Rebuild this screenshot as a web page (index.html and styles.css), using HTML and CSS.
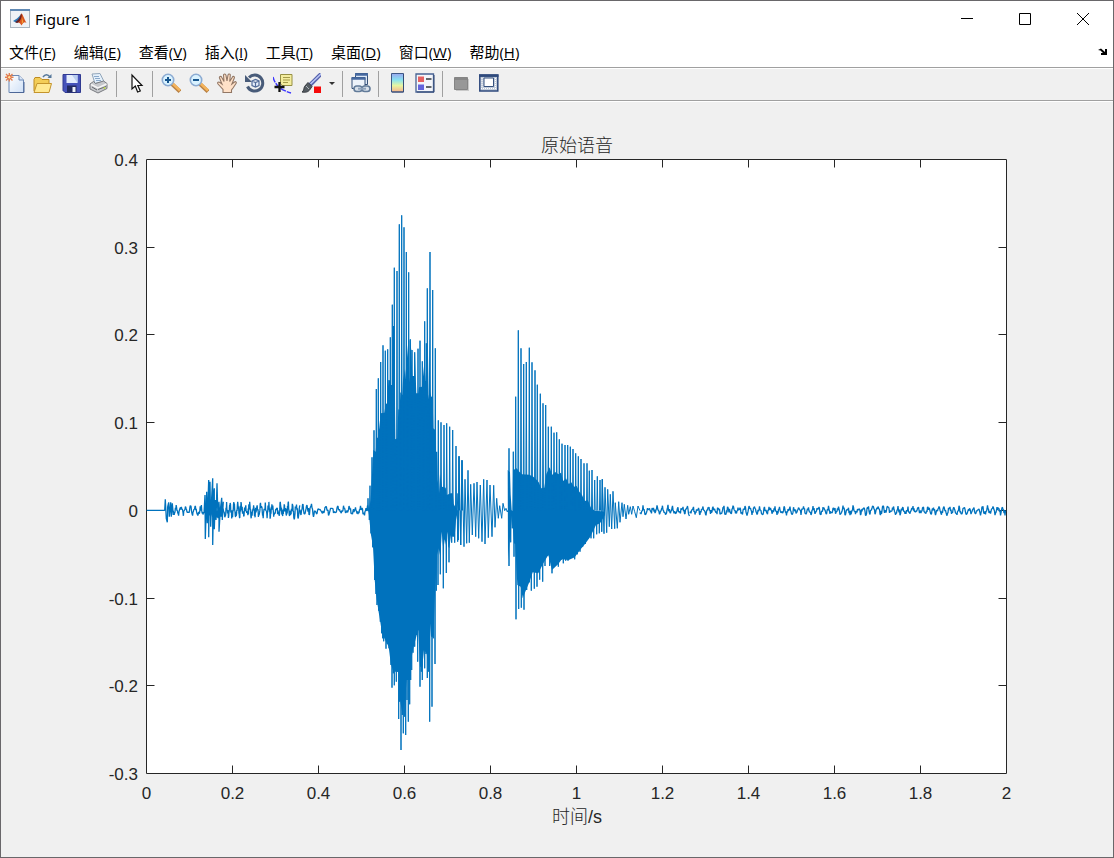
FILE: index.html
```html
<!DOCTYPE html>
<html lang="zh-CN">
<head>
<meta charset="utf-8">
<title>Figure 1</title>
<link rel="stylesheet" href="styles.css">
</head>
<body>
<div class="window">
  <header class="titlebar">
    <svg class="app-icon" viewBox="0 0 20 20" aria-hidden="true">
      <rect x=".5" y=".5" width="19" height="18" fill="#eef2f6" stroke="#a9b4be"/>
      <rect x="0" y="0" width="20" height="2" fill="#6089b4"/>
      <path d="M3 12 7 9.500 9.500 7 11 5 10.500 12 7 14z" fill="#2c76b5"/>
      <path d="M11.500 4.500c1 0 2 4 5 9.500-2-1.500-3-.500-5 2.500-1-2-2-3-3.500-3 1.500-2 2-8 3.500-9z" fill="#d9541e"/>
      <path d="M11.500 4.500c.800 3-.500 7-3.500 9l-1 .500-2-1c3-1 5-5 6.500-8.500z" fill="#6b2021"/>
      <path d="M11.800 8l1.500 5-1.500 2z" fill="#f3a43a"/>
    </svg>
    <h1 class="title">Figure 1</h1>
    <div class="controls">
      <button class="control" aria-label="最小化"><svg viewBox="0 0 12 12"><path d="M0 5.500h12"/></svg></button>
      <button class="control" aria-label="最大化"><svg viewBox="0 0 12 12"><path d="M.5.5h11v11H.5z"/></svg></button>
      <button class="control" aria-label="关闭"><svg viewBox="0 0 12 12"><path d="M0 0l12 12M12 0L0 12"/></svg></button>
    </div>
  </header>
  <nav class="menubar">
    <button class="menu">文件(<u>F</u>)</button>
    <button class="menu">编辑(<u>E</u>)</button>
    <button class="menu">查看(<u>V</u>)</button>
    <button class="menu">插入(<u>I</u>)</button>
    <button class="menu">工具(<u>T</u>)</button>
    <button class="menu">桌面(<u>D</u>)</button>
    <button class="menu">窗口(<u>W</u>)</button>
    <button class="menu">帮助(<u>H</u>)</button>
    <button class="dock" aria-label="停靠"><svg viewBox="0 0 10 8"><path d="M0 2 3 .500 7 4V1h2v6H3V5h2L2.500 2.500z"/></svg></button>
  </nav>
  <div class="toolbar" role="toolbar">
    <button class="tool" aria-label="新建"><svg viewBox="0 0 20 22">
      <defs><linearGradient id="page" x2="1" y2="1"><stop offset="0" stop-color="#fff"/><stop offset="1" stop-color="#cfe0f6"/></linearGradient></defs>
      <path d="M4 2.500h10l4.500 4.500v12.500H4z" fill="url(#page)" stroke="#6b88b5"/><path d="M5 19.500h14V9" fill="none" stroke="#4d6797"/><path d="M14 2.500V7h4.500" fill="#dbe7f8" stroke="#6b88b5"/>
      <path d="M1 1l6.500 6.500M7.500 1 1 7.500M0 4.300h8.500M4.300 0v8.500" stroke="#e08052" stroke-width="1.400"/><circle cx="4.300" cy="4.300" r="1.800" fill="#ffe19a" stroke="#e36b3c"/></svg></button>
    <button class="tool" aria-label="打开"><svg viewBox="0 0 20 22">
      <path d="M1 18V6.500l1-2h5l2 2h7V18z" fill="#f3cd57" stroke="#bd8b22"/><path d="M1 19.500 4 10.500h14.500l-2.500 9z" fill="#ffe991" stroke="#c4942b"/>
      <path d="M10 4c2-3 5-3 7 0" fill="none" stroke="#56789b" stroke-width="1.500"/><path d="M14.500 5h4V1z" fill="#56789b"/></svg></button>
    <button class="tool" aria-label="保存"><svg viewBox="0 0 20 22">
      <path d="M2 1.500h17.500v18H4l-2-2z" fill="#4653ba" stroke="#303a91"/><path d="M5.500 2h11v8h-11z" fill="#e4edfc"/><path d="M11 2h5.500v8z" fill="#b9cdf0"/><path d="M6 12.500h9.500v7H6z" fill="#232b62"/><path d="M11.500 14h3v5h-3z" fill="#eef2fb"/></svg></button>
    <button class="tool" aria-label="打印"><svg viewBox="0 0 20 22">
      <path d="M3 1l8-.500 4 8-9 2z" fill="#e4f0fb" stroke="#91a5b9"/><path d="M5 3.500h5M6 5.500h5M7 7.500h5" stroke="#89a8ca"/>
      <path d="M1 11 4.500 8.500l2 2 8-2.500 3.500 2.500v5L9 20l-8-4z" fill="#c6c8cc" stroke="#787b80"/><path d="M2 11.500 9 15l8.500-4" fill="none" stroke="#f5f5f5" stroke-width="1.500"/><path d="M9 16.500l8-3M3 14l5 3" stroke="#66696d"/><circle cx="15.500" cy="15" r="1" fill="#bcdc42"/></svg></button>
    <span class="separator"></span>
    <button class="tool" aria-label="编辑绘图"><svg viewBox="0 0 20 22">
      <path d="M7 2v14l3.300-3 2.300 6 2.700-1-2.500-5.500H17z" fill="#fff" stroke="#111" stroke-width="1.200"/></svg></button>
    <span class="separator"></span>
    <button class="tool" aria-label="放大"><svg viewBox="0 0 20 22">
      <path d="M11 11l8 7.500" stroke="#b98245" stroke-width="4"/><path d="M11.500 10.500l7.500 7" stroke="#f5b45b" stroke-width="2.400"/><circle cx="7" cy="7" r="5.700" fill="#d9f2ff" stroke="#8cabd2" stroke-width="1.600"/><path d="M4 7h6M7 4v6" stroke="#17568e" stroke-width="2"/></svg></button>
    <button class="tool" aria-label="缩小"><svg viewBox="0 0 20 22">
      <path d="M11 11l8 7.500" stroke="#b98245" stroke-width="4"/><path d="M11.500 10.500l7.500 7" stroke="#f5b45b" stroke-width="2.400"/><circle cx="7" cy="7" r="5.700" fill="#d9f2ff" stroke="#8cabd2" stroke-width="1.600"/><path d="M4 7h6" stroke="#17568e" stroke-width="2"/></svg></button>
    <button class="tool" aria-label="平移"><svg viewBox="0 0 20 22">
      <path d="M6 19.500v-3L1 11c-1-1.500.500-2.500 2-1.500l2 1.500L2.500 5C2 3.300 4 2.800 4.700 4.300L7 8.500 6.500 2.300c0-1.800 2.200-1.800 2.500 0l1 5.700 1-6c.300-1.500 2.500-1.300 2.300.3l-.6 6.200 2.600-4.300c.8-1.500 2.500-.6 2 .8l-2.400 6 2.600-2c1.400-.9 2.300.4 1.500 1.500L16 15l-1.500 2v2.500z" fill="#ffe1c8" stroke="#927765" stroke-width="1.100"/></svg></button>
    <button class="tool" aria-label="三维旋转"><svg viewBox="0 0 20 22">
      <path d="M4 4.500a8 8 0 1 1-1.500 9" fill="none" stroke="#485b79" stroke-width="3"/><path d="M0 2v7h7z" fill="#485b79"/><path d="M7 8l3.500-1.500L14 8v4.500L10.500 14 7 12.500zM7 8l3.500 1.500L14 8M10.500 9.500V14" fill="#e6eefb" stroke="#536c99" stroke-width="1.200"/></svg></button>
    <button class="tool" aria-label="数据游标"><svg viewBox="0 0 20 22">
      <path d="M0 4c1 4 2 5 4 8s7 6 14 8" fill="none" stroke="#3b35ff" stroke-width="1.400" stroke-dasharray="6 1"/><path d="M7.500 1.500H19v11H9l-1.500-2z" fill="#f4ed9e" stroke="#969044"/><path d="M10 4.500h7M10 7h7M10 9.500h5" stroke="#a49b4b"/><path d="M1.500 14h10M6.500 9v10" stroke="#111" stroke-width="2.300"/></svg></button>
    <button class="tool" aria-label="刷亮"><svg viewBox="0 0 20 22">
      <path d="M9 12 20 1" stroke="#5661ac" stroke-width="4"/><path d="M9.500 11 20 1" stroke="#b9c6f5" stroke-width="1.600"/><path d="M7 9.500l4 4-2 3c-2 3-5 3-8 2.500 2-1 1.500-3 2.500-5.500z" fill="#555c62" stroke="#363a40"/><path d="M5 13l3 3" stroke="#aeb4ba"/><path d="M13 13.500h7v6.500h-7z" fill="#f50a0a"/></svg></button>
    <button class="tool-arrow" aria-label="刷亮选项"><svg viewBox="0 0 6 4"><path d="M0 0h6L3 3z"/></svg></button>
    <span class="separator"></span>
    <button class="tool" aria-label="链接绘图"><svg viewBox="0 0 20 22">
      <path d="M4.500.5h12v11h-12z" fill="#dce8f6" stroke="#355078"/><path d="M4 1.500h13" stroke="#4669a0" stroke-width="2.500"/><path d="M1 4.500h13v11H1z" fill="#edf3fa" stroke="#355078"/><path d="M.5 5.500h14" stroke="#4669a0" stroke-width="2.500"/><rect x="3" y="13" width="8" height="5.500" rx="2.700" fill="#d7e0ea" stroke="#627b99" stroke-width="1.600"/><rect x="11" y="13" width="8" height="5.500" rx="2.700" fill="#d7e0ea" stroke="#627b99" stroke-width="1.600"/><path d="M7 15.700h8" stroke="#8ea2ba" stroke-width="2"/></svg></button>
    <span class="separator"></span>
    <button class="tool" aria-label="颜色栏"><svg viewBox="0 0 20 22">
      <defs><linearGradient id="bar" x2="0" y2="1"><stop offset="0" stop-color="#9aa7ef"/><stop offset=".35" stop-color="#88e3f1"/><stop offset=".65" stop-color="#e6f6a2"/><stop offset="1" stop-color="#f6b28d"/></linearGradient></defs>
      <path d="M4.500.5h12v18.500h-12z" fill="url(#bar)" stroke="#405987"/><path d="M5 19h11.500V1" fill="none" stroke="#344b77"/></svg></button>
    <button class="tool" aria-label="图例"><svg viewBox="0 0 20 22">
      <path d="M1 1h17.500v18H1z" fill="#f3f5fa" stroke="#476292" stroke-width="1.300"/><path d="M2 19h17V2" fill="none" stroke="#344b77"/><path d="M3 3.500h6V9H3z" fill="#e66161"/><path d="M3 11.500h6V17H3z" fill="#6464dc"/><path d="M11 6h5.500M11 14h5.500" stroke="#34383c" stroke-width="1.300"/></svg></button>
    <span class="separator"></span>
    <button class="tool" aria-label="隐藏绘图工具"><svg viewBox="0 0 20 22">
      <path d="M5 6h13v12H5z" fill="#c9c9c9"/><path d="M3.500 4.500h13v12h-13z" fill="#989898" stroke="#858585"/><path d="M4 6h12" stroke="#777"/></svg></button>
    <button class="tool" aria-label="显示绘图工具"><svg viewBox="0 0 20 22">
      <path d="M.8 2h18v16h-18z" fill="#c3cddb" stroke="#2f4a7d" stroke-width="1.500"/><path d="M0 2.700h19.500" stroke="#2f4a7d" stroke-width="2.500"/><path d="M5 5h9.500v8.500H5z" fill="#fff" stroke="#35517f"/><path d="M2 15.500h15.500" stroke="#fff" stroke-dasharray="1 1"/><path d="M3 5v9M16.500 5v9" stroke="#fff" stroke-dasharray="1 1"/></svg></button>
  </div>
  <main class="figure">
    <svg class="plot" viewBox="1 102 1112 755" role="img" aria-label="原始语音">
      <rect class="axes-bg" x="146" y="159" width="861" height="615"/>
      <path class="axes" id="axes"/>
      <g id="labels"></g>
      <path class="body" id="body"/>
      <path class="wave" id="wave"/>
      <path class="wave noise" id="noise"/>
      <text class="caption" x="577" y="152">原始语音</text>
      <text class="caption" x="577" y="823">时间/s</text>
    </svg>
  </main>
</div>
<script src="plot.js"></script>
</body>
</html>
```

FILE: styles.css
```css
* { box-sizing: border-box; }

body {
  margin: 0;
  background: #f0f0f0;
  color: #000;
  font-family: "Noto Sans", "Noto Sans CJK SC", sans-serif;
}

button {
  margin: 0;
  padding: 0;
  border: 0;
  background: transparent;
  color: inherit;
  font: inherit;
}

svg { display: block; }

.window {
  display: flex;
  flex-direction: column;
  height: 100vh;
  border: 1px solid #69676a;
}

.titlebar {
  display: flex;
  align-items: center;
  height: 37px;
  padding: 0 1px 2px 9px;
  background: #fff;
}

.app-icon { width: 20px; height: 20px; }

.title {
  margin: 0 0 0 5px;
  font-size: 15px;
  font-weight: 400;
  line-height: 20px;
}

.controls {
  display: flex;
  height: 100%;
  margin-left: auto;
}

.control {
  display: grid;
  place-items: center;
  width: 58px;
}

.control svg {
  width: 12px;
  height: 12px;
  fill: none;
  stroke: #000;
}

.menubar {
  display: flex;
  align-items: center;
  gap: 18px;
  height: 30px;
  padding: 0 5px 2px 8px;
  border-bottom: 1px solid #a0a0a0;
  background: #fff;
}

.menu {
  font-family: "Open Sans", "Noto Sans CJK SC", sans-serif;
  font-size: 15px;
  line-height: 20px;
  white-space: nowrap;
}

.dock { margin-left: auto; }
.dock svg { width: 10px; height: 8px; }

.toolbar {
  display: flex;
  gap: 8px;
  padding: 4px 4px 5px;
  border-top: 1px solid #fff;
  border-bottom: 1px solid #a0a0a0;
}

.tool svg {
  width: 20px;
  height: 22px;
  fill: none;
}

.tool-arrow svg { width: 6px; height: 4px; fill: #333; }

.separator {
  width: 1px;
  margin: -2px 0 -2px -1px;
  background: #a0a0a0;
}

.figure {
  flex: 1;
  min-height: 0;
  border-top: 1px solid #fff;
}

.plot { width: 100%; height: 100%; }
.axes-bg { fill: #fff; }
.axes { fill: none; stroke: #262626; }
.body { fill: #0072bd; }
.wave { fill: none; stroke: #0072bd; stroke-linejoin: bevel; }
.noise { stroke-width: 1.3; }

.tick {
  fill: #262626;
  font-family: "Liberation Sans", Arial, sans-serif;
  font-size: 17px;
}

.tick-x { text-anchor: middle; }
.tick-y { text-anchor: end; }

.caption {
  fill: #262626;
  font-family: "Liberation Sans", "Noto Sans CJK SC", sans-serif;
  font-size: 18px;
  font-weight: 300;
  text-anchor: middle;
}
```

FILE: plot.js
```js
const left = 146.5, right = 1006.5, top0 = 159.5, bottom = 773.5, zero = 510.5;
const svgNS = "http://www.w3.org/2000/svg";

/* Axes box, ticks and tick labels */
const labels = document.getElementById("labels");
function label(x, y, text, cls) {
  const t = document.createElementNS(svgNS, "text");
  t.setAttribute("x", x);
  t.setAttribute("y", y);
  t.setAttribute("class", "tick " + cls);
  t.textContent = text;
  labels.appendChild(t);
}
let axes = `M${left} ${top0}H${right}V${bottom}H${left}Z`;
for (let i = 0; i <= 10; i++) {
  const x = left + i * 86;
  if (i > 0 && i < 10) axes += `M${x} ${top0}v8M${x} ${bottom}v-8`;
  label(x, 799, String(i / 5), "tick-x");
}
for (let i = 0; i <= 7; i++) {
  const y = Math.round(top0 + i * 614 / 7 - 0.5) + 0.5;
  if (i > 0 && i < 7) axes += `M${left} ${y}h8M${right} ${y}h-8`;
  label(138, y + 6.5, String((4 - i) / 10), "tick-y");
}
document.getElementById("axes").setAttribute("d", axes);

/* Sample lists hold x, y pairs at three units per pixel from an origin */
function points(x0, y0, list) {
  const out = [];
  for (let i = 0; i < list.length; i += 2) out.push([x0 + list[i] / 3, y0 + list[i + 1] / 3]);
  return out;
}
const at = p => p[0].toFixed(1) + " " + p[1].toFixed(1);
const line = pts => "M" + pts.map(at).join("L");
/* Each spike leans out slightly towards the zero line */
const spikes = pts => pts.map(p =>
  `M${(p[0] - 0.5).toFixed(1)} ${zero}L${p[0].toFixed(1)} ${p[1].toFixed(1)}L${(p[0] + 0.5).toFixed(1)} ${zero}`).join("");

const firstUp = points(350, 200, [54,895,60,857,66,772,72,691,79,567,85,535,92,486,99,436,106,452,113,448,121,412,127,314,133,203,141,213,148,73,155,46,162,82,169,156,176,217,181,418,186,450,194,457,204,446,210,422,217,484,224,364,229,430,232,265,240,156,248,270,256,445,265,661,273,667,282,675,290,670,299,680,308,690,318,738,327,769,336,781]);
const firstDown = points(350, 500, [58,60,63,100,68,142,74,240,78,282,81,315,86,332,91,365,95,400,98,415,101,424,108,446,112,432,117,445,123,495,126,563,130,520,133,556,139,545,143,515,146,657,149,605,153,750,157,645,160,700,164,650,167,705,171,600,175,665,179,613,182,540,185,510,189,458,194,440,199,405,203,485,210,560,214,515,217,540,221,450,224,505,228,462,232,534,236,515,239,665,246,620,250,415,255,492,259,272,264,255,271,223,280,265,289,219,297,187,305,128,314,128,323,125,332,135]);
const firstTopEdge = points(350, 200, [56,932,62,900,70,750,77,755,80,712,84,714,88,682,92,640,103,638,107,612,112,610,115,540,119,540,122,555,126,555,129,378,133,378,136,718,142,715,145,628,149,630,151,576,157,585,159,540,165,507,169,550,172,435,178,548,179,418,184,450,187,528,192,528,195,460,199,580,205,580,207,562,216,560,223,490,227,543,232,545,235,598,238,408,241,575,244,590,248,590,250,685,256,690,258,755,262,755,263,840,267,880,270,822,276,860,287,863,290,885,302,880,308,880,311,912,322,932]);
const firstBottomEdge = points(350, 500, [324,30,318,60,314,110,307,110,303,105,298,145,295,140,292,95,288,135,284,118,280,150,275,95,271,170,266,145,261,165,258,220,254,300,250,410,243,410,240,370,236,515,230,460,222,450,217,500,210,500,205,390,200,405,190,445,185,470,180,540,170,540,165,600,157,640,150,600,146,515,130,515,122,490,116,440,108,425,96,400,90,360,85,330,78,282,74,240,69,140,62,100,56,35]);
const secondUp = points(490, 320, [57,385,70,395,77,230,85,31,93,85,101,132,109,126,118,83,126,127,135,151,142,194,151,221,159,250,167,255,175,320,184,320,192,338,200,337,208,358,216,371,225,375,233,375,241,380,249,387,257,400,265,409,273,417,282,430,291,430,298,452,306,450,314,480,322,469,330,480,337,478]);
const secondDown = points(490, 320, [57,738,62,667,67,625,72,710,78,898,86,867,94,863,102,869,110,810,118,787,124,812,133,806,141,800,149,779,158,785,165,738,173,708,179,738,186,760,196,735,205,740,213,720,220,730,227,722,234,722,246,710,254,718,262,703,270,695,278,680,286,672,295,655,303,655,311,655,320,643,328,640,335,635]);
const secondTopEdge = points(490, 320, [53,450,60,457,62,525,65,572,69,572,70,450,80,445,88,455,96,463,118,464,130,470,138,478,146,487,154,505,163,503,169,462,179,442,186,465,195,456,206,463,213,458,220,483,228,475,236,492,244,487,252,500,260,498,268,515,276,525,284,543,294,541,302,562,314,572,345,575]);
const secondBottomEdge = points(490, 320, [345,585,330,610,318,615,300,652,285,672,270,690,254,712,236,720,215,718,205,732,186,750,175,705,160,730,145,760,128,757,118,787,108,810,98,835,92,800,82,795,76,672,72,670,66,585,60,650,54,720]);

document.getElementById("body").setAttribute("d",
  line(firstTopEdge.concat(firstBottomEdge)) + "Z" +
  line(secondTopEdge.concat(secondBottomEdge)) + "Z");

/* Open oscillations between and after the voiced parts */
const middle = points(350, 200, [322,880,325,1020,327,769,332,1035,336,781,342,1040,345,838,350,1030,354,811,358,1028,362,853,367,1005,372,850,377,1010,381,846,386,1015,391,855,396,1025,401,838,405,1032,411,840,415,1013,420,855,426,1010,431,856,435,982,440,895,445,955,449,917,455,955,459,910,464,932,468,925,472,936,475,930]);
const tail = points(490, 320, [335,635,337,478,342,641,345,502,350,638,353,508,358,620,361,523,365,627,369,514,374,626,376,548,382,625,386,545,390,607,396,548,399,590,403,553,408,597,413,556,416,583,421,560,425,583,429,558,434,575,439,593,444,558,450,572]);
const burst = points(140, 460, [192,160,195,105,196,237,200,95,202,190,206,60,206,232,208,100,210,65,212,200,215,110,218,55,218,255,221,100,223,85,223,208,226,120,228,180,231,70,234,175,237,125,237,215,241,150,245,113,247,180,250,125]);
const onset = points(140, 460, [20,151,74,151,76,118,79,176,82,187,83,140,86,127,88,170,92,127,94,170,97,130,100,165]);

/* Background noise from a fixed seed */
let seed = 7;
const random = () => (seed = (seed * 16807) % 2147483647) / 2147483647;
function noise(from, to, amp, step, period) {
  const pts = [];
  let phase = 0;
  for (let x = from; x < to; x += step) {
    phase += step * 2 * Math.PI / period * (0.6 + 0.8 * random());
    pts.push([x, zero + amp * (0.6 * Math.sin(phase) + 1.1 * (random() - 0.5))]);
  }
  return line(pts);
}

document.getElementById("wave").setAttribute("d",
  spikes(firstUp) + spikes(firstDown) + line(middle) +
  spikes(secondUp) + spikes(secondDown) + line(tail));

document.getElementById("noise").setAttribute("d",
  line(onset) + noise(173, 205, 5, 0.4, 5) + line(burst) +
  noise(205, 220, 9, 0.4, 4) + noise(220, 300, 8, 0.3, 4) + noise(300, 315, 6, 0.5, 4) +
  noise(315, 369, 4.5, 0.5, 6) + noise(640, 690, 5, 0.5, 5) + noise(690, 1006.5, 4.5, 0.5, 5));
```
